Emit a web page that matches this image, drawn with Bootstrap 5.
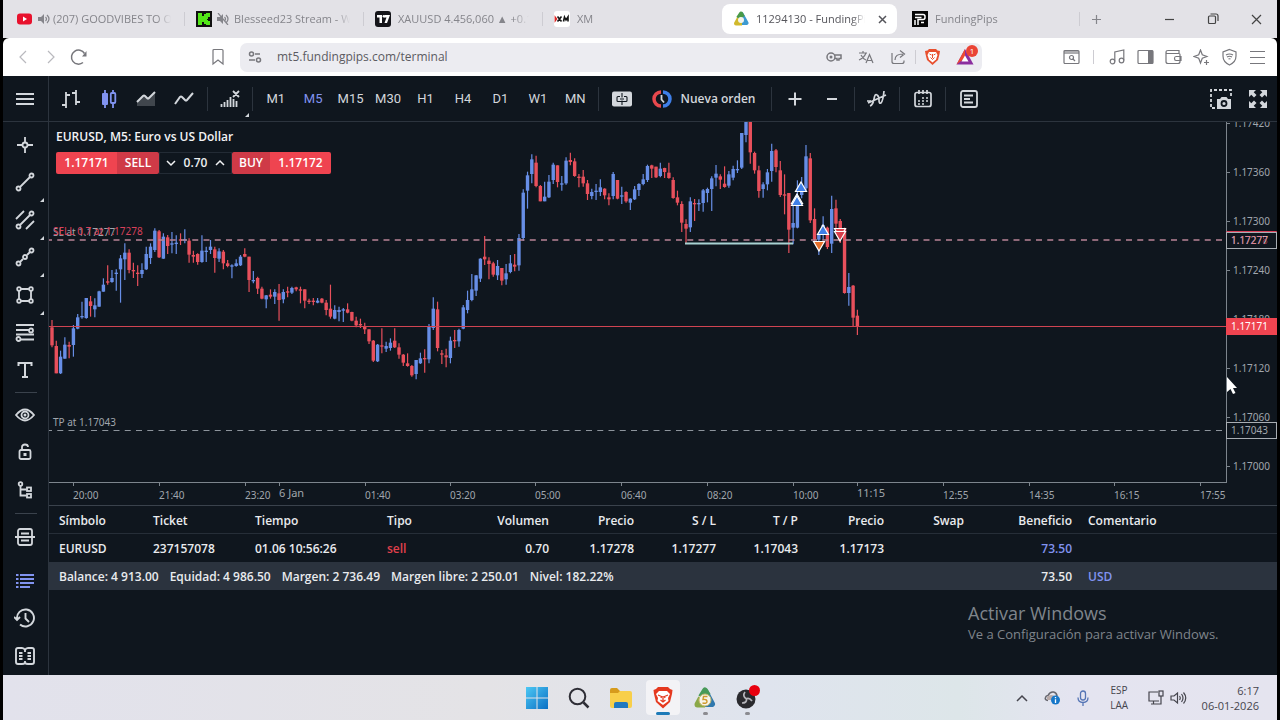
<!DOCTYPE html>
<html lang="es">
<head>
<meta charset="utf-8">
<meta name="viewport" content="width=device-width, initial-scale=1">
<title>11294130 - FundingPips</title>
<link href="https://cdn.jsdelivr.net/npm/bootstrap@5.3.0/dist/css/bootstrap.min.css" rel="stylesheet">
<style>
:root{--ink:#0f161e;--line:#2c343e;--fg:#d3d7dc;--blue:#8193f0;--red:#ef4450}
body{background:#000;font-family:"Open Sans","Noto Sans",sans-serif;font-size:12px;line-height:16px}
#screen{margin:0 3px}
svg{display:block;flex:none}
button{background:none;border:0;padding:0;color:inherit;font:inherit}
.i{fill:none;stroke:currentColor;stroke-width:1.2}
.f{fill:currentColor;stroke:none}
/* browser */
.tabstrip{height:38px;background:#e3e2e7;color:#85858b}
.tabstrip nav{min-width:0;padding-left:3px}
.tabitem{flex:0 1 179px;min-width:0;height:30px;padding:0 0 0 11px;gap:7px}
.tabitem a{color:inherit;text-decoration:none;white-space:nowrap;overflow:hidden;flex:1;font-size:11px;margin-right:6px;
 -webkit-mask-image:linear-gradient(90deg,#000 88%,transparent);mask-image:linear-gradient(90deg,#000 88%,transparent)}
.tabitem.on{background:#fff;border-radius:8px;color:#55555b;flex-basis:175px;margin-right:4px;padding-right:10px}
.bar{width:1px;height:14px;background:#cdccd2}
.winbtns{color:#444;gap:30px;padding-right:15px}
.addr{height:38px;background:#fff;border-radius:6px 6px 0 0;color:#77777c}
.urlbox{height:29px;width:742px;background:#ececf1;border-radius:7px;padding:0 8px;gap:15px;margin-left:15px;flex:0 1 742px}
.urlbox input{border:0;background:none;outline:0;color:#5b5b61;font-size:12px;flex:1;min-width:0;padding:0}
.urlbox .bar{margin:0 -7px}
/* terminal */
.term{background:var(--ink);color:var(--fg)}
.tools{height:46px;border-bottom:1px solid var(--line)}
.burger{width:45px;padding-right:2px!important}
.tools button{height:44px;display:flex;align-items:center;justify-content:center;position:relative}
.cellw{width:37px}
.vsep{width:1px;height:24px;background:#2c343e;margin:0 4px}
.grp{display:grid;grid-auto-flow:column;grid-auto-columns:1fr}
.tf{width:337px;font-family:Roboto,"Liberation Sans",sans-serif;font-size:13px}
.tf .on,.side .on,.tools .on{color:var(--blue)}
.side{width:46px;flex:none;border-right:1px solid var(--line);padding-top:4px}
.side div{display:grid;grid-auto-rows:1fr}
.side button{display:flex;align-items:center;justify-content:center;position:relative;width:100%;padding-right:2px}
.corner::after{content:"";position:absolute;right:4px;bottom:-1px;border:2px solid var(--fg);border-top-color:transparent;border-left-color:transparent}
.tools .corner::after{right:-1px;bottom:4px}
.side hr{width:22px;margin:3px auto;border:0;height:1px;background:#3a424c;opacity:1}
.plot{height:361px}
.plot text,.times text{font-family:"Noto Sans",sans-serif;font-size:10px;fill:#a0a6ad}
.times{height:22px}
.overlay{left:7px;top:6px;font-weight:600;color:#f2f3f5}
.quote{height:22px;margin-top:6px}
.quote>button{height:22px;background:var(--red);color:#fff;line-height:22px;border-radius:2px 0 0 2px;width:61px;font-weight:600}
.quote .dk{background:#cf3a47;border-radius:0 2px 2px 0;width:42px}
.quote .dk.lft{border-radius:2px 0 0 2px;width:38px}
.quote .lt{border-radius:0 2px 2px 0}
.stepper{width:73px;border:1px solid #232b35;height:22px;gap:3px}
.stepper input{width:33px;border:0;background:none;color:#eceef0;text-align:center;font-weight:600;padding:0;outline:0}
.trades{table-layout:fixed;font-weight:600;color:#e9ebee;border-top:1px solid #3a424c;font-size:12px}
.trades th,.trades td{padding:2px 6px 0 10px;height:28px;white-space:nowrap;font-weight:600;overflow:hidden}
.trades th{border-bottom:1px solid #262e38}
.trades tfoot td{background:#2b333e}
.water{right:50px;bottom:32px;width:259px;color:#7f858c;font-size:13px;line-height:18px}
.water p{font-size:18px;line-height:24px}
/* task bar */
.taskbar{height:45px;background:linear-gradient(90deg,#e2e2ec,#e4e3e6 38%,#dfe4ee 60%,#dde6e9 75%,#e4e4f0 84%,#e5e4ef);color:#45454d;display:grid;grid-template-columns:1fr auto 1fr;font-size:10px;line-height:15px}
.app{width:42px;height:45px;display:flex;align-items:center;justify-content:center;position:relative}
.app.on::before{content:"";position:absolute;inset:5px 4px;background:#f3f3f6;border-radius:4px}
.app svg{position:relative}
.app.run::after{content:"";position:absolute;bottom:5px;width:5px;height:3px;border-radius:2px;background:#8b8b90}
.app.on::after{width:14px;background:#1c7ab8}
.tray{padding-right:18px}
</style>
</head>
<body>
<div class="min-vh-100 d-flex flex-column" id="screen">

<header class="tabstrip d-flex align-items-center">
  <nav class="d-flex align-items-center flex-grow-1">
    <div class="tabitem d-flex align-items-center"><svg width="18" height="14" viewBox="0 0 18 14"><rect x="0" y="1.500" width="15" height="11" rx="3" fill="#e8112d"/><path d="M6 4.500l4 2.500-4 2.500z" fill="#fff"/></svg><svg width="12" height="12" viewBox="0 0 12 12" class="i" style="margin:0 -4px"><path class="f" d="M0 4h3l3-3v10L3 8H0z"/><path d="M7.500 4q2 2 0 4M9 2q4 4 0 8"/></svg><a href="#">(207) GOODVIBES TO Or</a><span class="bar"></span></div>
    <div class="tabitem d-flex align-items-center"><svg width="16" height="16" viewBox="0 0 16 16"><path fill="#111" d="M0 0h16v16H0z"/><path fill="#53e818" d="M2 2h4v3h2V3h2V2h4v4h-2v2h-1v1h1v1h2v4h-4v-1H8v-2H6v3H2z"/></svg><svg width="12" height="12" viewBox="0 0 12 12" class="i" style="margin:0 -2px"><path class="f" d="M0 4h3l3-3v10L3 8H0z"/><path d="M7.500 4q2 2 0 4M9 2q4 4 0 8M1 0l10 12"/></svg><a href="#">Blesseed23 Stream - Wa</a><span class="bar"></span></div>
    <div class="tabitem d-flex align-items-center"><svg width="16" height="16" viewBox="0 0 16 16"><rect width="16" height="16" rx="3" fill="#15151a"/><path fill="#fff" d="M2 4h5v8H4.500V6.500H2zM9.500 4H15l-3 8H9.500l2-5.500H9z"/><circle cx="8.800" cy="5.200" r="1.200" fill="#fff"/></svg><a href="#">XAUUSD 4.456,060 ▲ +0.15</a><span class="bar"></span></div>
    <div class="tabitem d-flex align-items-center"><svg width="16" height="16" viewBox="0 0 16 16"><rect width="16" height="16" rx="3" fill="#fff"/><path fill="none" stroke="#151515" stroke-width="1.600" d="M3.500 5.500l4 5M7.500 5.500l-4 5M9.500 10.500l1-4.500 1.500 3 2-3v4.500"/><path fill="none" stroke="#d22" stroke-width="1.200" d="M1.200 6v4l1.500-2z"/></svg><a href="#">XM</a></div>
    <div class="tabitem on d-flex align-items-center"><svg width="16" height="16" viewBox="0 0 16 16"><path d="M8 2l5.500 10H8" fill="none" stroke="#3d9ad0" stroke-width="4" stroke-linejoin="round"/><path d="M9 12.500H3L6 7" fill="none" stroke="#d1b92c" stroke-width="4" stroke-linejoin="round"/><path d="M5 7l3-4.500 2 3.500" fill="none" stroke="#4a9a48" stroke-width="4" stroke-linejoin="round"/><circle cx="8" cy="9" r="3" fill="#f3f3ec"/></svg><a href="#">11294130 - FundingPips</a><button aria-label="Cerrar"><svg width="9" height="9" viewBox="0 0 9 9" class="i" style="stroke-width:1.500"><path d="M1 1l7 7M8 1L1 8"/></svg></button></div>
    <div class="tabitem d-flex align-items-center"><svg width="16" height="16" viewBox="0 0 16 16"><path d="M0 0h16v16H0z" fill="#060606"/><path d="M3 3.500h8q2 0 2 2v1q0 2-2 2H6V14M3 6.500h6.500M3 9v5M9 11.500h3" stroke="#fff" stroke-width="1.500" fill="none"/></svg><a href="#">FundingPips</a><span class="bar"></span></div>
    <button style="margin-left:11px" aria-label="Nueva pestaña"><svg width="11" height="11" viewBox="0 0 11 11" class="i"><path d="M5.500 1v9M1 5.500h9"/></svg></button>
  </nav>
  <div class="winbtns d-flex align-items-center">
    <button aria-label="Minimizar"><svg width="12" height="12" viewBox="0 0 12 12" class="i"><path d="M1 6.500h9"/></svg></button>
    <button aria-label="Restaurar"><svg width="14" height="12" viewBox="0 0 14 12" class="i"><rect x="2.500" y="3" width="7" height="7.500" rx="1"/><path d="M4.500 1h5.500q2 0 2 2v5"/></svg></button>
    <button aria-label="Cerrar"><svg width="12" height="12" viewBox="0 0 12 12" class="i"><path d="M2 2l9 9M11 2l-9 9"/></svg></button>
  </div>
</header>

<div class="addr d-flex align-items-center">
  <div class="d-flex align-items-center" style="gap:12px;padding-left:14px">
    <button aria-label="Atrás"><svg width="13" height="16" viewBox="0 0 13 16" class="i" style="color:#b9b9be"><path d="M9 2L3 8l6 6"/></svg></button>
    <button aria-label="Adelante"><svg width="16" height="16" viewBox="0 0 16 16" class="i" style="color:#b9b9be"><path d="M6 2l6 6-6 6"/></svg></button>
    <button aria-label="Recargar"><svg width="18" height="18" viewBox="0 0 18 18" class="i" style="stroke-width:1.500"><path d="M13 14.500A7 7 0 1 1 14.500 5.500"/><path class="f" d="M16.500 3v5.500H12z"/></svg></button>
  </div>
  <button aria-label="Marcador" style="margin-left:123px"><svg width="14" height="18" viewBox="0 0 14 18" class="i"><path d="M2 2.500q0-1 1-1h8q1 0 1 1v13.500L7 12l-5 4z"/></svg></button>
  <div class="urlbox d-flex align-items-center">
    <svg width="14" height="14" viewBox="0 0 14 14" class="i" style="stroke-width:1.500"><circle cx="3.500" cy="4" r="2"/><path d="M7 4h5M1 10h6"/><circle cx="10.500" cy="10" r="2"/></svg>
    <input type="text" aria-label="Dirección" value="mt5.fundingpips.com/terminal">
    <svg width="17" height="12" viewBox="0 0 17 12" class="i" style="stroke-width:1.500"><circle cx="5" cy="6" r="4"/><circle class="f" cx="5" cy="6" r="1.500"/><path d="M8.500 4H15v3.500h-2V9h-2V7.500H8.500"/></svg>
    <svg width="17" height="16" viewBox="0 0 17 16" class="i"><path d="M1 4h8M5 2v2M8 4Q6 9 1 11M3 6q2 4 5 5M8 14l3.500-8.500L15 14M9.300 11.500h4.500"/></svg>
    <svg width="17" height="16" viewBox="0 0 17 16" class="i"><path d="M2 4v8.500q0 2 2 2h8q2 0 2-2v-1M5 11q0-6 8-6M10 1.500L14.500 5 10 8.500"/></svg>
    <span class="bar"></span>
    <svg width="17" height="18" viewBox="0 0 17 18"><path d="M5 1h7l1.500 1.500L16 3l-.500 3-1.500 6-5.500 5L3 12 1.500 6 1 3l2.500-.500z" fill="#e8502f"/><path d="M5 4h7l1.500 3-1.500 4.500-3.500 3L5 11.500 3.500 7z" fill="#fff"/><path d="M5.500 6l2 1M11.500 6l-2 1M8.500 6v4M6.500 9.500l2 2 2-2" stroke="#e8502f" fill="none"/></svg>
    <span class="position-relative"><svg width="18" height="16" viewBox="0 0 18 16"><path d="M9 0l8.500 15.500H.500z" fill="#8b2e9f"/><path d="M9 0L.500 15.500 9 9z" fill="#ee4a32"/><path d="M9 6.500l3.500 6h-7z" fill="#fff"/></svg><span class="position-absolute text-white text-center rounded-circle" style="background:#ea4435;width:12px;height:12px;font-size:8px;line-height:12px;left:10px;top:-4px">1</span></span>
  </div>
  <div class="d-flex align-items-center ms-auto" style="gap:11px;padding-right:11px">
    <svg width="17" height="16" viewBox="0 0 17 16" class="i"><rect x="1" y="1.500" width="15" height="13" rx="1"/><path d="M1 3.500h15" stroke-width="3" opacity=".6"/><circle cx="8.500" cy="8.500" r="2"/><path d="M10 10l2 2"/></svg>
    <span class="bar" style="margin:0 4px 0 2px"></span>
    <svg width="17" height="16" viewBox="0 0 17 16" class="i"><circle cx="3.500" cy="12.500" r="2.300"/><circle cx="12.500" cy="11.500" r="2.300"/><path d="M5.800 12.500V3l9-2v10.500"/></svg>
    <svg width="17" height="16" viewBox="0 0 17 16" class="i"><rect x="1" y="1.500" width="15" height="13" rx="1"/><path class="f" d="M11 1.500h5v13h-5z"/></svg>
    <svg width="17" height="16" viewBox="0 0 17 16" class="i"><path d="M1 2.500v10q0 2 2 2h10q2 0 2-2v-7q0-1-1-1H2.500Q1 4.500 1 3q0-1.500 2-1.500h11v3M16 7.500h-5q-1.500 0-1.500 2t1.500 2h5z"/></svg>
    <svg width="17" height="17" viewBox="0 0 17 17" class="i"><path d="M7.500 1l1.800 4.700L14 7.500 9.300 9.300 7.500 14 5.700 9.300 1 7.500l4.700-1.800zM13.500 11v5M11 13.500h5"/></svg>
    <svg width="17" height="18" viewBox="0 0 17 18" class="i"><path d="M8.500 1.500L15 4v4q0 6-6.500 9Q2 14 2 8V4zM5 7q3.500-2 7 0M6 9q2.500-1.500 5 0M7.500 11q1-.500 2 0"/></svg>
    <button aria-label="Menú"><svg width="17" height="16" viewBox="0 0 17 16" class="i"><path d="M1 2.500h15M1 8.500h15M1 14.500h15"/></svg></button>
  </div>
</div>

<div class="term flex-grow-1 d-flex flex-column">
  <div class="tools d-flex align-items-center">
    <button class="burger" aria-label="Menú"><svg width="18" height="14" viewBox="0 0 18 14" class="i" style="stroke-width:2"><path d="M0 2h18M0 7h18M0 12h18"/></svg></button>
    <span style="width:1px;height:45px;background:var(--line);margin-right:3px"></span>
    <div class="grp" style="width:151px">
      <button aria-label="Barras"><svg width="20" height="20" viewBox="0 0 20 20" class="i" style="stroke-width:1.800"><path d="M5 3v16M1 16h4M5 6h4M15 1v15M11 4h4M15 13h4"/></svg></button>
      <button class="on" aria-label="Velas"><svg width="16" height="20" viewBox="0 0 16 20" class="i" style="stroke-width:1.800"><path d="M4 1v18M12 1v3M12 14v5"/><rect class="f" x="1" y="4" width="6" height="12" rx="1"/><rect x="9.800" y="4" width="4.500" height="10" rx="1"/></svg></button>
      <button aria-label="Área"><svg width="20" height="18" viewBox="0 0 20 18" class="i" style="stroke-width:2"><path class="f" opacity=".25" d="M1 12l6-7 4 4 8-7v14H1z"/><path d="M1 12l6-6q1-1 2 0l2 2q1 1 2 0l6-6"/></svg></button>
      <button aria-label="Línea"><svg width="20" height="18" viewBox="0 0 20 18" class="i" style="stroke-width:2"><path d="M1 14l5-7q1-1 2 0l3 3q1 1 2 0l6-7"/></svg></button>
    </div>
    <span class="vsep"></span>
    <button class="corner" style="width:36px" aria-label="Volúmenes"><svg width="20" height="20" viewBox="0 0 20 20" class="i" style="stroke-width:1.800"><path d="M1.500 18v-3M4.500 18v-5M7.500 18v-7M10.500 18V8M13.500 18v-8M16.500 18v-6M13 2l6 6M19 2l-6 6"/></svg></button>
    <span class="vsep"></span>
    <div class="grp tf"><button>M1</button><button class="on">M5</button><button>M15</button><button>M30</button><button>H1</button><button>H4</button><button>D1</button><button>W1</button><button>MN</button></div>
    <span class="vsep"></span>
    <button class="cellw" aria-label="Trading"><svg width="20" height="16" viewBox="0 0 20 16"><rect width="20" height="15" y=".500" rx="2" fill="#d3d7dc"/><path d="M8 5.500H6q-1 0-1 1v3q0 1 1 1h8q1 0 1-1v-3q0-1-1-1h-2M10 2v4.500M10 9.500V14M8 8h4" stroke="#0f161e" stroke-width="1.100" fill="none"/></svg></button>
    <button style="width:127px;gap:9px" class="fw-semibold"><svg width="20" height="18" viewBox="0 0 20 18" fill="none" stroke-width="3.500"><path d="M9 2A7 7 0 0 0 9 16" stroke="#e8484d"/><path d="M11 2a7 7 0 0 1 0 14" stroke="#3f7fe8"/><path d="M9.500 5v4.500l2.500 3" stroke="#d3d7dc" stroke-width="1.800"/></svg>Nueva orden</button>
    <span class="vsep"></span>
    <div class="grp" style="width:74px">
      <button aria-label="Acercar"><svg width="14" height="14" viewBox="0 0 14 14" class="i" style="stroke-width:2"><path d="M7 .500v13M.500 7h13"/></svg></button>
      <button aria-label="Alejar"><svg width="14" height="14" viewBox="0 0 14 14" class="i" style="stroke-width:2"><path d="M2 7h10"/></svg></button>
    </div>
    <span class="vsep"></span>
    <button style="width:36px" aria-label="Indicadores"><svg width="20" height="18" viewBox="0 0 20 18" class="i" style="stroke-width:1.700"><path d="M0 11h4M3 16Q6 15 7 9t3-4q2 1 2 5t2 3q2-2 3-12M1 13L19 5"/></svg></button>
    <span class="vsep"></span>
    <button class="cellw" aria-label="Calendario"><svg width="18" height="18" viewBox="0 0 18 18" class="i" style="stroke-width:1.700"><rect x="1" y="2.500" width="16" height="14" rx="2"/><path d="M5 0v4M9 0v4M13 0v4"/><path stroke-dasharray="2 2" d="M8 8h6M4 11h10M4 14h6"/></svg></button>
    <span class="vsep"></span>
    <button class="cellw" aria-label="Noticias"><svg width="18" height="18" viewBox="0 0 18 18" class="i" style="stroke-width:1.800"><rect x="1" y="1" width="16" height="16" rx="2"/><path d="M4 5.500h9M4 9h6M4 12.500h9"/></svg></button>
    <div class="grp ms-auto" style="width:75px">
      <button aria-label="Captura"><svg width="22" height="20" viewBox="0 0 22 20" class="i" style="stroke-width:1.800"><path stroke-dasharray="3 2" d="M5 19H1V1h20v7"/><path class="f" d="M7 10h3l1.500-2h5L18 10h3v10H7z"/><circle cx="14" cy="14.500" r="2.500" stroke="#0f161e"/></svg></button>
      <button aria-label="Pantalla completa"><svg width="18" height="18" viewBox="0 0 18 18"><path fill="#d3d7dc" d="M0 0h7L4.700 2.300 7.500 5 5 7.500 2.300 4.700 0 7zM18 0v7l-2.300-2.300L13 7.500 10.500 5l2.800-2.700L11 0zM18 18h-7l2.300-2.300-2.800-2.700 2.500-2.500 2.700 2.800L18 11zM0 18v-7l2.300 2.300L5 10.500 7.500 13l-2.800 2.700L7 18z"/></svg></button>
    </div>
  </div>

  <div class="d-flex flex-grow-1">
    <aside class="side">
      <div style="height:263px">
        <button aria-label="Cruz"><svg width="18" height="18" viewBox="0 0 18 18" class="i" style="stroke-width:1.800"><path d="M9 1v5M9 12v5M1 9h5M12 9h5"/><circle cx="9" cy="9" r="2.500"/></svg></button>
        <button class="corner" aria-label="Línea de tendencia"><svg width="20" height="20" viewBox="0 0 20 20" class="i" style="stroke-width:1.800"><path d="M5 15L15 5"/><circle cx="3.500" cy="16.500" r="2"/><circle cx="16.500" cy="3.500" r="2"/></svg></button>
        <button class="corner" aria-label="Canal"><svg width="20" height="20" viewBox="0 0 20 20" class="i" style="stroke-width:1.800"><path d="M5 15L15 5M1 9l8-8M11 19l8-8"/><circle cx="3.500" cy="16.500" r="2"/><circle cx="16.500" cy="3.500" r="2"/></svg></button>
        <button class="corner" aria-label="Segmentos"><svg width="20" height="20" viewBox="0 0 20 20" class="i" style="stroke-width:1.800"><path d="M5 15l3-3M12 8l3-3"/><circle cx="3.500" cy="16.500" r="2"/><circle cx="10" cy="10" r="2"/><circle cx="16.500" cy="3.500" r="2"/></svg></button>
        <button class="corner" aria-label="Rectángulo"><svg width="18" height="18" viewBox="0 0 18 18" class="i" style="stroke-width:1.800"><path d="M5 3h8M5 15h8M3 5v8M15 5v8"/><circle cx="3" cy="3" r="1.800"/><circle cx="15" cy="3" r="1.800"/><circle cx="3" cy="15" r="1.800"/><circle cx="15" cy="15" r="1.800"/></svg></button>
        <button aria-label="Fibonacci"><svg width="20" height="18" viewBox="0 0 20 18" class="i" style="stroke-width:1.800"><path d="M1 1h18M1 6h13M1 10.500h18M6 15.500h13"/><circle cx="16" cy="6.500" r="2"/><circle cx="3.500" cy="15" r="2"/></svg></button>
        <button aria-label="Texto"><svg width="16" height="18" viewBox="0 0 16 18" class="i" style="stroke-width:2"><path d="M1.500 5V2h13v3M8 2v14M5 16h6"/></svg></button>
      </div>
      <hr>
      <div style="height:113px">
        <button aria-label="Mostrar"><svg width="20" height="14" viewBox="0 0 20 14" class="i" style="stroke-width:1.800"><path d="M1 7q9-11 18 0-9 11-18 0z"/><circle cx="10" cy="7" r="3.500"/><circle class="f" cx="10" cy="7" r="1.500"/></svg></button>
        <button aria-label="Bloquear"><svg width="14" height="18" viewBox="0 0 14 18" class="i" style="stroke-width:1.800"><rect x="1.500" y="7" width="11" height="9" rx="1.500"/><path d="M4 7V4q0-2.500 3-2.500T10 4"/><path class="f" d="M5.500 10h3v3h-3z"/></svg></button>
        <button aria-label="Objetos"><svg width="16" height="18" viewBox="0 0 16 18" class="i" style="stroke-width:1.800"><circle cx="3.500" cy="3" r="1.800"/><path d="M3.500 5v9.500h6M3.500 8.500h6"/><rect x="10" y="6.500" width="4" height="3.500"/><rect x="10" y="13" width="4" height="3.500"/></svg></button>
      </div>
      <hr class="my-1">
      <div style="height:37px"><button aria-label="Ventana de mercado"><svg width="20" height="18" viewBox="0 0 20 18" class="i" style="stroke-width:1.800"><rect x="3" y="1" width="14" height="16" rx="2"/><path d="M0 9h20M6 5.500h8M6 12.500h8"/></svg></button></div>
      <div style="height:113px;margin-top:7px">
        <button class="on" aria-label="Operaciones"><svg width="18" height="16" viewBox="0 0 18 16" class="i" style="stroke-width:2"><path d="M0 2h2.500M4 2h14M0 6h2.500M4 6h14M0 10h2.500M4 10h14M0 14h2.500M4 14h10"/></svg></button>
        <button aria-label="Historial"><svg width="22" height="20" viewBox="0 0 22 20" class="i" style="stroke-width:1.900"><path d="M3 11A8.500 8.500 0 1 1 6 16.500M11.500 5v5.500l3.500 3.500M0 9l3 3 3-3"/></svg></button>
        <button aria-label="Diario"><svg width="20" height="18" viewBox="0 0 20 18" class="i" style="stroke-width:1.900"><path d="M10 3Q9 1 7 1H3Q1 1 1 3v12q0 2 2 2h4q2 0 3-1 1 1 3 1h4q2 0 2-2V3q0-2-2-2h-4q-2 0-3 2zM10 3v2M10 14v2M4 6h3.500M4 9h3.500M4 12h3.500M12.500 6H16M12.500 9H16M12.500 12H16"/></svg></button>
      </div>
    </aside>

    <main class="flex-grow-1 d-flex flex-column position-relative" style="min-width:0">
      <div class="plot d-flex">
        <svg id="chart" class="flex-grow-1" width="0" height="361" role="img" aria-label="EURUSD M5"></svg>
        <svg id="prices" width="51" height="361"></svg>
      </div>
      <svg class="times w-100" id="times"></svg>

      <div class="overlay position-absolute">
        <div style="line-height:18px">EURUSD, M5: Euro vs US Dollar</div>
        <div class="quote d-flex">
          <button>1.17171</button><button class="dk">SELL</button>
          <div class="stepper d-flex align-items-center justify-content-center">
            <button aria-label="Menos"><svg width="10" height="8" viewBox="0 0 10 8" class="i" style="stroke-width:1.500"><path d="M1 2l4 4 4-4"/></svg></button>
            <input type="text" value="0.70" aria-label="Volumen">
            <button aria-label="Más"><svg width="10" height="8" viewBox="0 0 10 8" class="i" style="stroke-width:1.500"><path d="M1 6l4-4 4 4"/></svg></button>
          </div>
          <button class="dk lft">BUY</button><button class="lt">1.17172</button>
        </div>
      </div>

      <table class="trades w-100">
        <colgroup><col style="width:94px"><col style="width:102px"><col style="width:132px"><col style="width:72px"><col style="width:106px"><col style="width:85px"><col style="width:82px"><col style="width:82px"><col style="width:86px"><col style="width:80px"><col style="width:108px"><col></colgroup>
        <thead><tr><th>Símbolo</th><th>Ticket</th><th>Tiempo</th><th>Tipo</th><th class="text-end">Volumen</th><th class="text-end">Precio</th><th class="text-end">S / L</th><th class="text-end">T / P</th><th class="text-end">Precio</th><th class="text-end">Swap</th><th class="text-end">Beneficio</th><th>Comentario</th></tr></thead>
        <tbody><tr><td>EURUSD</td><td>237157078</td><td>01.06 10:56:26</td><td style="color:#e0404c">sell</td><td class="text-end">0.70</td><td class="text-end">1.17278</td><td class="text-end">1.17277</td><td class="text-end">1.17043</td><td class="text-end">1.17173</td><td></td><td class="text-end" style="color:var(--blue)">73.50</td><td></td></tr></tbody>
        <tfoot><tr><td colspan="10"><div class="d-flex" style="gap:11px"><span>Balance: 4 913.00</span><span>Equidad: 4 986.50</span><span>Margen: 2 736.49</span><span>Margen libre: 2 250.01</span><span>Nivel: 182.22%</span></div></td><td class="text-end">73.50</td><td style="color:var(--blue)">USD</td></tr></tfoot>
      </table>

      <div class="water position-absolute"><p class="m-0">Activar Windows</p>Ve a Configuración para activar Windows.</div>
      <svg class="position-absolute" style="right:40px;top:255px" width="11" height="18" viewBox="0 0 11 18"><path d="M1 0v15l3.500-3 2.500 5 2.500-1-2.500-5h4z" fill="#fff"/></svg>
    </main>
  </div>
</div>

<footer class="taskbar">
  <span></span>
  <div class="d-flex ps-1">
    <button class="app" aria-label="Inicio"><svg width="22" height="22" viewBox="0 0 22 22"><defs><linearGradient id="w" x2="1" y2="1"><stop stop-color="#4cc8f4"/><stop offset="1" stop-color="#0a6fc4"/></linearGradient></defs><path fill="url(#w)" d="M0 0h10.500v10.500H0zM11.500 0H22v10.500H11.500zM0 11.500h10.500V22H0zM11.500 11.500H22V22H11.500z"/></svg></button>
    <button class="app" aria-label="Buscar"><svg width="22" height="22" viewBox="0 0 22 22" fill="none" stroke="#2e2e36"><circle cx="9.500" cy="9.500" r="7.800" stroke-width="2"/><path d="M15.500 15.500l5 5" stroke-width="2.500"/></svg></button>
    <button class="app" aria-label="Explorador"><svg width="24" height="20" viewBox="0 0 24 20"><path fill="#d69b1c" d="M1 2q0-2 2-2h5l3 3h10v5H1z"/><path fill="#f8cf4a" d="M1 5h8l2-2h10q2 0 2 2v13q0 2-2 2H3q-2 0-2-2z"/><path fill="#2179c0" d="M5 20v-4q0-2 2-2h10q2 0 2 2v4z"/></svg></button>
    <button class="app on run" aria-label="Brave"><svg width="20" height="22" viewBox="0 0 20 22"><path d="M5 0h10l2 2 2.500 1-.500 4-2 8-7 6.500L3 15 1 7 .500 3 3 2z" fill="#e5391f"/><path d="M6 4h8l3 3-2 4 .500 3-5.500 4-5.500-4L5 11 3 7z" fill="#fff"/><path d="M5 8l3.500 1.500L8 11M15 8l-3.500 1.500.500 1.500M10 9v5M7.500 13l2.500 2 2.500-2" stroke="#e5391f" stroke-width="1.300" fill="none"/></svg></button>
    <button class="app run" aria-label="MetaTrader"><svg width="24" height="22" viewBox="0 0 24 22"><path d="M12 4l7 13h-7" fill="none" stroke="#2f78ad" stroke-width="6" stroke-linejoin="round"/><path d="M12 17.500H4.500L8 11" fill="none" stroke="#8aa848" stroke-width="6" stroke-linejoin="round"/><path d="M8 10l4-6.500 3 5" fill="none" stroke="#479a58" stroke-width="6" stroke-linejoin="round"/><circle cx="12" cy="13" r="6" fill="#f6f4ea" stroke="#c8b96a"/><path d="M14.500 9.500h-4l-.500 3q4-.500 4 2t-4.500 1.500" fill="none" stroke="#cf9a2c" stroke-width="1.400"/></svg></button>
    <button class="app run" aria-label="OBS"><svg width="26" height="28" viewBox="0 0 26 28"><circle cx="12" cy="15" r="9.500" fill="#2a2a2e"/><path d="M11 8q-3 4 1.500 7M18 17q-3-4-6-2M8 19q5 0 4.500-4" stroke="#b5b5ba" stroke-width="1.700" fill="none"/><circle cx="20.500" cy="6.500" r="5.500" fill="#e8000f"/></svg></button>
  </div>
  <div class="tray d-flex align-items-center justify-content-end">
    <button aria-label="Iconos ocultos"><svg width="12" height="12" viewBox="0 0 12 12" class="i" style="stroke-width:1.500"><path d="M1 9l5-5 5 5"/></svg></button>
    <svg style="margin-left:16px" width="17" height="15" viewBox="0 0 17 15"><path d="M4 10.500Q.500 10 1.500 7.500 2 5.500 4 5.500 6 1.500 9.500 2q3 .500 3.500 4" fill="none" stroke="#66666d" stroke-width="1.600"/><path d="M3 7q4-4 9 0l-4 3H3z" fill="#b9aaa8"/><circle cx="11.500" cy="10" r="4.500" fill="#1677c9"/><path d="M11.500 7v1.300M11.500 9.200V13" stroke="#fff" stroke-width="1.300"/></svg>
    <svg style="margin-left:16px" width="12" height="16" viewBox="0 0 12 16" fill="none" stroke="#5575b5" stroke-width="1.300"><rect x="3.500" y="1" width="5" height="9" rx="2.500"/><path d="M1 7.500q0 5 5 5t5-5M6 12.500V16"/></svg>
    <span class="text-center" style="margin-left:20px;width:21px">ESP LAA</span>
    <svg style="margin-left:17px" width="17" height="16" viewBox="0 0 17 16" class="i"><path d="M11 2H2v9h10M4 14h7M6.500 11v3M14 6v8h-3"/><rect x="12" y="1" width="4" height="5"/></svg>
    <svg style="margin-left:6px" width="17" height="14" viewBox="0 0 17 14" class="i"><path d="M1 5h3l3.500-3v10L4 9H1zM9.500 5q1.500 2 0 4M11.500 3q3 4 0 8M13.500 1.500q4.500 5.500 0 11"/></svg>
    <span class="text-end" style="margin-left:15px;font-size:11px">6:17<br>06-01-2026</span>
  </div>
</footer>
</div>

<script src="https://cdn.jsdelivr.net/npm/bootstrap@5.3.0/dist/js/bootstrap.bundle.min.js"></script>
<script>
// Each candle: direction (r falls, b rises), high, body top, body bottom, low, in thirds of a pixel
const early = `r600,622,676,682 r662,678,760,760 b692,710,760,762 b652,674,716,716 r665,675,680,715 b615,625,675,710 b582,592,626,628 b545,588,592,596 b534,534,594,596 r528,544,558,590
b535,556,568,592 b512,514,560,560 b475,494,515,515 r436,484,488,494 b450,474,486,488 b448,458,462,512 b405,415,448,548 b370,398,418,480 r388,398,450,460 r428,450,454,474
r436,458,462,498 b430,450,462,474 b380,402,448,450 b370,380,414,432 b325,332,390,396 r330,334,412,414 b340,350,416,416 r345,352,378,402 b336,370,374,400 b346,368,372,402
r340,358,362,375 b328,358,362,370 r355,362,404,428 r392,405,410,428 r400,402,426,434 b346,392,426,428 b380,392,396,426 b360,380,390,402 r380,388,414,458 b385,394,416,426
r390,395,430,448 r420,430,438,442 b433,436,440,475 b418,430,438,440 b405,410,436,438 r385,402,410,412 r410,410,480,516 b453,480,484,490 r470,474,506,522 r500,506,536,538
b525,526,538,565 r508,524,530,536 b508,516,530,552 r492,520,540,602 b508,516,538,550 r500,514,518,532 b500,504,518,522 r500,502,508,514 r500,508,512,550 r508,508,542,565
r536,542,546,552 r534,542,546,556 b534,542,548,550 r534,536,548,550 r540,548,570,586 r494,566,590,596 b556,570,596,598 b560,570,576,604 b564,568,572,606 r550,568,578,580
r575,576,602,604 r590,602,616,622 r596,612,616,624 r608,618,628,642 r628,628,664,672 r660,662,722,726 b672,674,724,726 r625,676,680,700 b665,678,686,696 b655,668,684,692
r625,662,682,684 r670,682,704,716 r702,704,728,738 r700,730,738,740 r735,738,766,770 b720,720,762,778 b698,715,730,732 r688,714,718,758 b612,620,718,730 b532,566,624,630
r545,568,684,694 r690,700,704,732 r686,706,712,742 b650,662,714,730 r630,660,664,684 b626,630,664,680 b555,562,626,628 b512,540,570,580 b462,508,540,544 b465,466,512,528
b415,416,476,486 r348,410,418,435 r412,422,432,478 r425,430,464,470 b420,438,466,480 r444,444,482,496 b432,460,478,494 b405,430,456,460 r402,434,440,454 b342,354,436,452
b208,218,354,362 b155,166,212,266 b103,118,162,190 r107,128,198,202 r195,198,244,244 b185,230,244,244 b165,185,232,234 b128,134,180,192 r136,136,186,202 b168,190,194,212
b112,122,190,194 r98,120,126,136 r115,124,168,170 r162,170,174,202 r150,170,190,200 r180,190,222,240 b206,216,228,238 b192,212,216,240 b178,202,216,228 r205,206,226,238
r220,232,238,256 b156,162,228,238 r180,180,236,238 b200,226,230,252 r214,216,244,248 b235,236,248,270 b198,208,238,240 b190,192,210,228 b162,178,192,196 b134,138,180,186
r134,136,146,174 r140,140,172,174 b128,146,168,172 r143,144,156,174 r128,158,174,176 r172,180,234,236 r212,232,248,256 r244,252,308,336 r298,312,326,372 b232,244,322,336`;
const late = `r252,264,268,318 b253,264,268,288 b222,226,264,290 b218,222,234,262 b184,190,222,288 b150,176,188,214 r178,184,194,222 r154,206,216,218 b168,178,212,218 b152,162,188,196
b136,162,166,174 b54,54,158,162 b20,20,60,82 r20,20,112,146 r110,114,166,176 r152,166,228,248 b202,208,222,248 b162,172,208,226 b86,108,168,200 r102,106,156,172
r138,166,240,246 r178,238,242,298 r234,234,344,414 b270,324,338,388 b196,270,338,340 b186,225,240,250 b90,124,220,226 r114,130,316,324 r280,312,374,378 b354,360,374,420
b304,330,350,374 r335,338,396,402 b242,282,386,414 r254,280,326,342 r312,318,350,384 r338,340,534,536 b474,516,534,572 r510,512,608,634 r584,602,636,660`;
const parse = (s, shift) => s.trim().split(/\s+/).map(c => [c[0], ...c.slice(1).split(',').map(v => v / 3 + shift)]);
const candles = [...parse(early, -2), ...parse(late, -7)];
const color = {r: '#e8505c', b: '#678ee6'};
let out = '';
candles.forEach(([k, hi, top, bot, lo], i) => {
  const x = 3 + i * 4.284;
  out += `<path stroke="${color[k]}" stroke-width="1.2" d="M${x} ${hi}V${lo}"/><rect x="${x - 1.7}" y="${top}" width="3.4" height="${Math.max(bot - top, 1)}" fill="${color[k]}"/>`;
});
const up = (x, y) => `<path d="M${x} ${y - 5}l5.500 9.500h-11z" fill="#3f7fe8" stroke="#fff" stroke-width="1.2"/>`;
const down = (x, y, f) => `<path d="M${x} ${y + 5}l5.500-9.500h-11z" fill="${f}" stroke="#fff" stroke-width="1.2"/>`;
out += `<rect x="0" y="204" width="100%" height="1" fill="#d04452"/>
<g stroke-dasharray="6 5.250"><path d="M-3 118H9999" stroke="#b98496" stroke-width="1.500"/><path d="M-3 308.500H9999" stroke="#8d949c"/></g>
<path d="M636 121.500H744" stroke="#a9d3d3" stroke-width="1.800"/>
${up(748, 77)}${up(748, 79)}${up(752, 65)}${up(774, 108)}${down(770, 124, '#e8702a')}${down(791, 111, '#d8404c')}${down(791, 114, '#d8404c')}
<text x="4" y="114">SL at 1.17277</text><text x="4" y="113" style="fill:#d8405a">SELL 0.7 at 1.17278</text><text x="4" y="304">TP at 1.17043</text>
<rect x="0" y="360" width="100%" height="1" fill="#7d858d"/>`;
document.getElementById('chart').innerHTML = out;

let ax = '<rect width="1" height="361" fill="#7d858d"/>';
['1.17420', '1.17360', '1.17300', '1.17240', '1.17180', '1.17120', '1.17060', '1.17000'].forEach((p, i) => {
  const y = 1 + i * 49;
  ax += `<path d="M0 ${y + .5}h4" stroke="#7d858d"/><text x="7" y="${y + 4}">${p}</text>`;
});
ax += `<path d="M.5 109.500h50v16" fill="none" stroke="#d8405a"/><rect x=".5" y="110.500" width="50" height="16" fill="#0f161e" stroke="#a9aeb4"/><text x="5" y="122" style="fill:#e0e2e6">1.17277</text><text x="5" y="122" style="fill:#d8405a;opacity:.6">1.17278</text>
<rect y="196" width="51" height="17" fill="#ef4450"/><text x="5" y="208" style="fill:#fff">1.17171</text>
<rect x=".5" y="300.500" width="50" height="16" fill="#0f161e" stroke="#a9aeb4"/><text x="5" y="312">1.17043</text>`;
document.getElementById('prices').innerHTML = ax;

document.getElementById('times').innerHTML = [[24, '20:00'], [110, '21:40'], [196, '23:20'], [230, '6 Jan', 1], [316, '01:40'], [401, '03:20'], [486, '05:00'], [572, '06:40'], [658, '08:20'], [744, '10:00'], [808, '11:15', 1], [894, '12:55'], [980, '14:35'], [1065, '16:15'], [1151, '17:55']]
  .map(([x, t, high]) => `<path d="M${x + .5} 0v3" stroke="#7d858d"/><text x="${x}" y="${high ? 14 : 16}"${high ? ' style="font-size:11px"' : ''}>${t}</text>`).join('');
</script>
</body>
</html>
